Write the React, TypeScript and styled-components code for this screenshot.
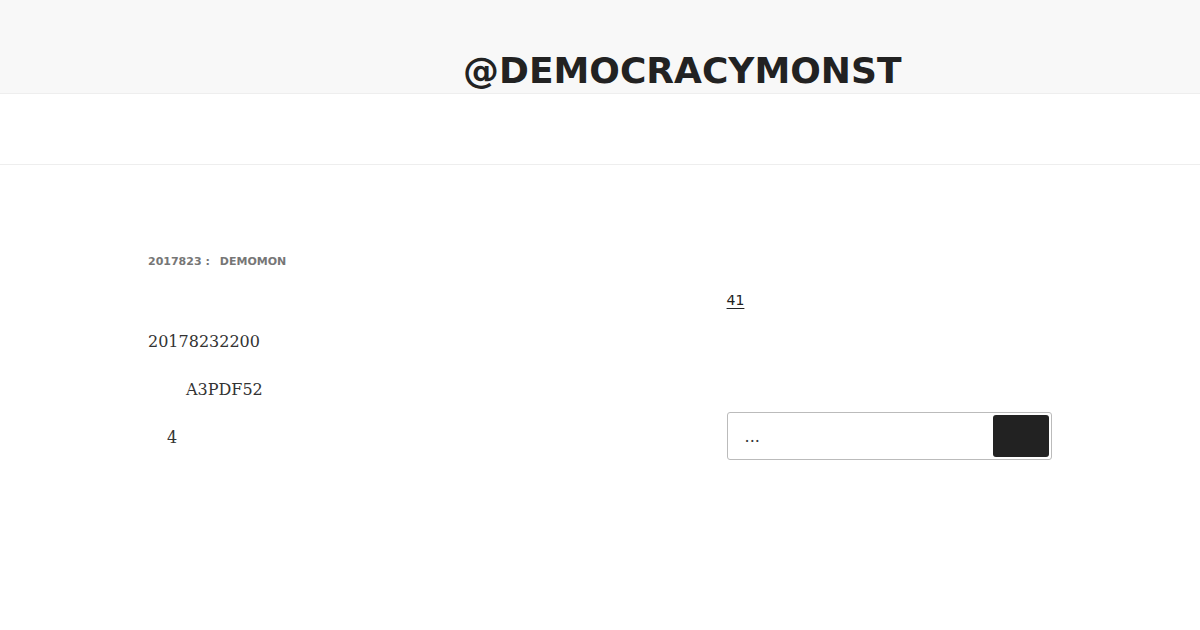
import { FC } from 'react';
import styled, { createGlobalStyle } from 'styled-components';

const GlobalStyle = createGlobalStyle`
  html, body {
    margin: 0;
    padding: 0;
    background: #fff;
  }

  body {
    font-family: 'DejaVu Serif', serif;
    color: #333;
  }
`;

const App: FC = () => {
  return (
    <Root>
      <GlobalStyle />
      <Masthead>
        <Branding>
          <SiteTitle>@DEMOCRACYMONST</SiteTitle>
        </Branding>
      </Masthead>
      <Navigation />
      <Wrap>
        <Primary>
          <EntryMeta>
            <MetaItem>2017823 :</MetaItem>
            <MetaItem>DEMOMON</MetaItem>
          </EntryMeta>
          <EntryContent>
            <Paragraph>20178232200</Paragraph>
            <Paragraph $indent={38}>A3PDF52</Paragraph>
            <Paragraph $indent={19}>4</Paragraph>
          </EntryContent>
        </Primary>
        <Secondary>
          <Widget>
            <WidgetLink href="#">41</WidgetLink>
          </Widget>
          <SearchForm onSubmit={(e) => e.preventDefault()}>
            <SearchField type="search" placeholder="..." />
            <SearchButton type="submit" aria-label="search" />
          </SearchForm>
        </Secondary>
      </Wrap>
    </Root>
  );
};

const Root = styled.div`
  min-height: 630px;
`;

const Masthead = styled.header`
  height: 93px;
  background: #f8f8f8;
  border-bottom: 1px solid #eee;
  box-sizing: content-box;
`;

const Branding = styled.div`
  max-width: 1000px;
  margin: 0 auto;
  padding: 48px 48px 0 363px;
  box-sizing: border-box;
`;

const SiteTitle = styled.h1`
  margin: 0;
  font-family: 'DejaVu Sans', sans-serif;
  font-weight: 800;
  font-size: 36px;
  line-height: 45px;
  color: #222;
  white-space: nowrap;
`;

const Navigation = styled.nav`
  height: 70px;
  border-bottom: 1px solid #eee;
`;

const Wrap = styled.div`
  max-width: 1000px;
  margin: 0 auto;
  padding: 89px 48px 0;
  box-sizing: border-box;
  display: flex;
  justify-content: space-between;
`;

const Primary = styled.main`
  width: 58%;
`;

const Secondary = styled.aside`
  width: 36%;
  padding-top: 36px;
`;

const EntryMeta = styled.div`
  display: flex;
  gap: 10px;
  font-family: 'DejaVu Sans', sans-serif;
  font-weight: 800;
  font-size: 11px;
  line-height: 16px;
  color: #767676;
  text-transform: uppercase;
`;

const MetaItem = styled.span``;

const EntryContent = styled.div`
  padding-top: 60px;
`;

const Paragraph = styled.p<{ $indent?: number }>`
  margin: 0 0 24px;
  padding-left: ${(p) => p.$indent ?? 0}px;
  font-size: 16px;
  line-height: 24px;
  color: #333;
`;

const Widget = styled.section`
  margin-bottom: 101px;
`;

const WidgetLink = styled.a`
  font-family: 'DejaVu Sans', sans-serif;
  font-size: 14px;
  line-height: 21px;
  color: #222;
  text-decoration: underline;
  text-underline-offset: 3px;
`;

const SearchForm = styled.form`
  position: relative;
  display: flex;
  align-items: center;
  height: 48px;
  border: 1px solid #bbb;
  border-radius: 3px;
  box-sizing: border-box;
  padding: 2px;
`;

const SearchField = styled.input`
  flex: 1;
  min-width: 0;
  height: 100%;
  border: 0;
  outline: none;
  padding: 0 0 0 15px;
  background: transparent;
  font-family: 'DejaVu Serif', serif;
  font-size: 16px;
  color: #333;

  &::placeholder {
    color: #333;
    opacity: 1;
  }
`;

const SearchButton = styled.button`
  width: 56px;
  height: 42px;
  border: 0;
  border-radius: 3px;
  background: #222;
  cursor: pointer;
`;

export default App;
